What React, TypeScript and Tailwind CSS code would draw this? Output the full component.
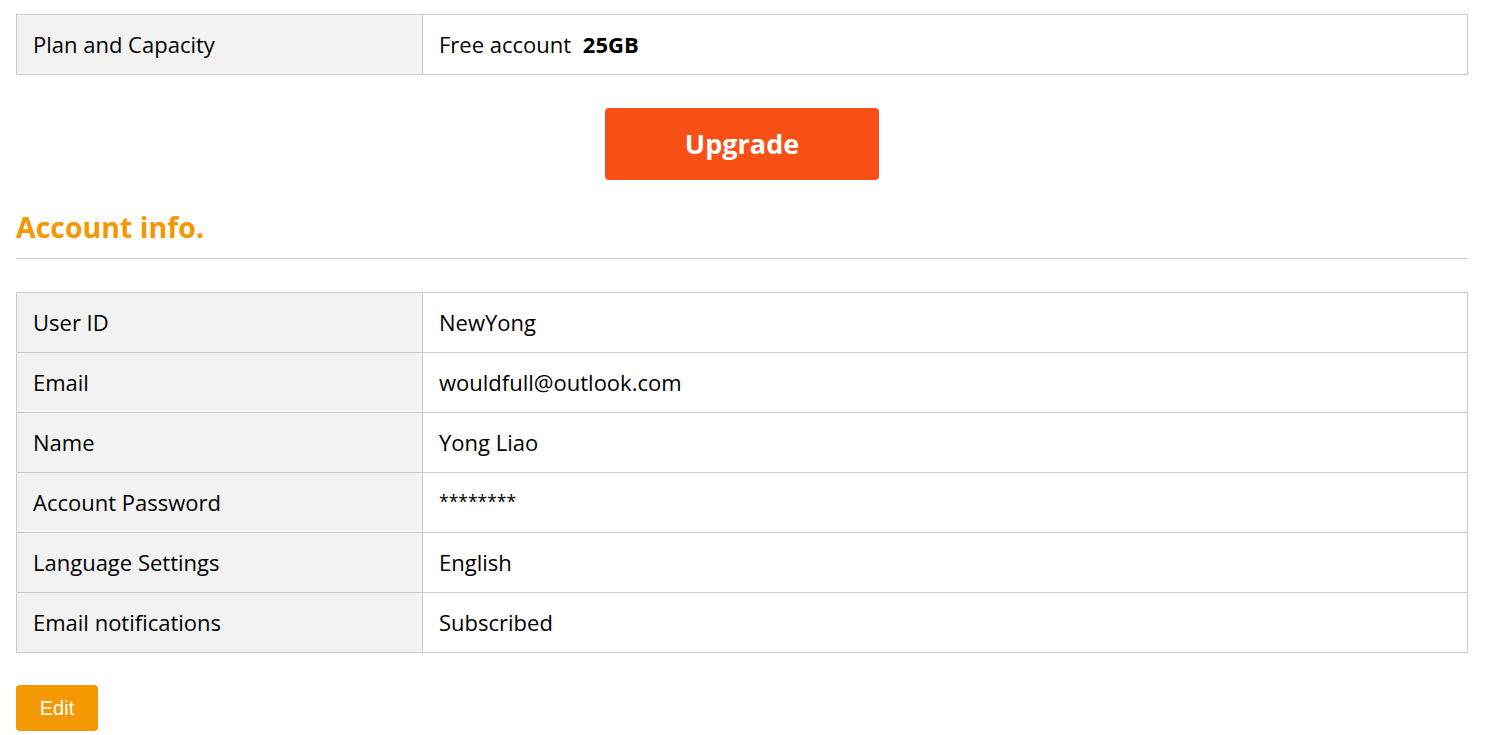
import React from "react";

const rows: [string, React.ReactNode][] = [
  ["User ID", "NewYong"],
  ["Email", "wouldfull@outlook.com"],
  ["Name", "Yong Liao"],
  ["Account Password", <span className="relative top-[-2px] text-[17.5px]">********</span>],
  ["Language Settings", "English"],
  ["Email notifications", "Subscribed"],
];

function Row({ label, children }: { label: string; children: React.ReactNode }) {
  return (
    <tr className="h-[60px]">
      <td className="w-[406px] border border-[#cccccc] bg-[#f2f2f2] px-4 pb-[2px] align-middle">{label}</td>
      <td className="border border-[#cccccc] bg-white px-4 pb-[2px] align-middle">{children}</td>
    </tr>
  );
}

export default function App() {
  return (
    <div
      className="w-[1496px] bg-white pl-4 pr-7 pt-[14px] text-[22px] leading-[30px] text-black"
      style={{ fontFamily: '"Open Sans", "Noto Sans", sans-serif' }}
    >
      <table className="w-full border-collapse">
        <tbody>
          <Row label="Plan and Capacity">
            Free account <b className="ml-1.5 font-bold">25GB</b>
          </Row>
        </tbody>
      </table>
      <div className="flex justify-center pt-[33px]">
        <button className="h-[72px] w-[274px] rounded bg-[#f95016] text-[27px] font-bold text-white">
          Upgrade
        </button>
      </div>
      <h2 className="mt-[29px] text-[28.5px] font-bold leading-[36px] text-[#f39800]">Account info.</h2>
      <div className="mt-[13px] h-px bg-[#cccccc]" />
      <table className="mt-[33px] w-full border-collapse">
        <tbody>
          {rows.map(([l, v]) => (
            <Row key={l} label={l}>
              {v}
            </Row>
          ))}
        </tbody>
      </table>
      <button
        className="mt-[32px] h-[46px] w-[82px] rounded bg-[#f39800] text-[20px] leading-normal text-white"
        style={{ fontFamily: '"Liberation Sans", Arial, sans-serif' }}
      >
        Edit
      </button>
    </div>
  );
}
